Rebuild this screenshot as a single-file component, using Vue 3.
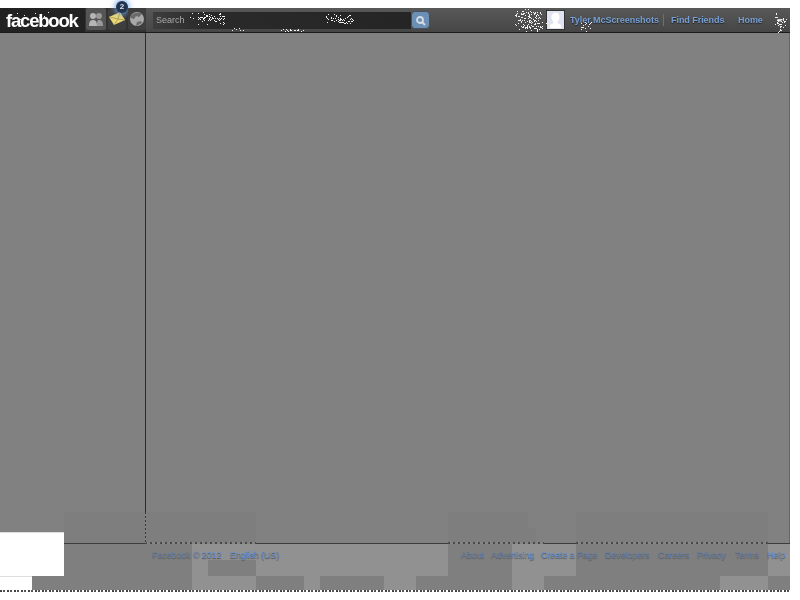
<script setup>
const footerLeft = [{ t: 'Facebook © 2012', w: 69 }, { t: 'English (US)', w: 48 }]
const footerRight = [
  { t: 'About', w: 23 }, { t: 'Advertising', w: 43 }, { t: 'Create a Page', w: 57 },
  { t: 'Developers', w: 46 }, { t: 'Careers', w: 32 }, { t: 'Privacy', w: 31 },
  { t: 'Terms', w: 25 }, { t: 'Help', w: 17 }
]
const box = (x, y, x2, y2) => ({ left: x + 'px', top: y + 'px', width: x2 - x + 'px', height: y2 - y + 'px' })
const upper = [[64, 512, 256, 543], [448, 512, 528, 543], [528, 528, 536, 543], [576, 512, 768, 543]].map(p => box(...p))
const lower = [
  [64, 544, 192, 576], [208, 560, 256, 576],
  [32, 576, 192, 592], [256, 576, 304, 592], [320, 576, 384, 592], [416, 576, 512, 592], [544, 576, 720, 592], [768, 576, 790, 592],
  [448, 544, 512, 576], [576, 544, 768, 576]
].map(p => box(...p))
const whites = [[0, 532, 64, 576], [0, 576, 32, 592]].map(p => box(...p))
const dashes = [[145, 542, 256, 544], [448, 542, 544, 544], [576, 542, 768, 544]].map(p => box(...p))

let seed = 7
const rnd = () => (seed = (seed * 16807) % 2147483647) / 2147483647
const cluster = (cx, cy, rx, ry, n) => Array.from({ length: n }, () => ({
  x: Math.round(cx + (rnd() + rnd() - 1) * rx),
  y: Math.round(cy + (rnd() + rnd() - 1) * ry)
})).filter(s => s.y >= 9 && s.y <= 32)
const specks = [
  ...cluster(208, 18, 20, 6, 70), ...cluster(340, 19, 16, 6, 60), ...cluster(530, 20, 18, 12, 150),
  ...cluster(290, 30, 20, 2, 18), ...cluster(232, 30, 14, 2, 8), ...cluster(780, 22, 8, 10, 40),
  ...cluster(40, 15, 30, 4, 10), ...cluster(586, 26, 8, 5, 18)
]
</script>

<template>
  <div class="page">
    <header class="bar">
      <div class="brand">facebook</div>
      <div class="jewels">
        <span class="jewel">
          <svg width="16" height="18" viewBox="0 0 16 18"><circle cx="5" cy="6" r="3" fill="#b5b5b5"/><path d="M1 16c0-4 1-6 4-6s4 2 4 6z" fill="#b5b5b5"/><circle cx="11" cy="6" r="3" fill="#999"/><path d="M9 16c0-4 0-6 2-6 3 0 4 2 4 6z" fill="#999"/></svg>
        </span>
        <span class="jewel plain">
          <svg width="18" height="16" viewBox="0 0 18 16"><path d="M1 6 12 1l5 8-11 5z" fill="#e8d678"/><path d="M1 6l9 2 2-7M6 14l4-6 7 1" fill="none" stroke="#a8964a" stroke-width=".8"/></svg>
          <i class="badge">2</i>
        </span>
        <span class="jewel plain">
          <svg width="18" height="16" viewBox="0 0 18 16"><circle cx="9" cy="8" r="7" fill="#a8a8a8"/><path d="M3 5c3-4 8-4 11-2l-3 3-3-1-2 3-3-1zM8 15l1-4 4-1 1 2z" fill="#6a6a6a"/></svg>
        </span>
      </div>
      <div class="search">
        <div class="field"><span>Search</span></div>
        <button class="go" aria-label="Search">
          <svg width="11" height="11" viewBox="0 0 11 11"><circle cx="5" cy="5" r="3" fill="none" stroke="#d5dde6" stroke-width="1.8"/><path d="M7.500 7.500 10 10" stroke="#d5dde6" stroke-width="1.800"/></svg>
        </button>
      </div>
      <nav class="nav">
        <span class="avatar">
          <svg width="17" height="17" viewBox="0 0 17 17"><rect width="17" height="17" fill="#dfe4f0"/><path d="M8.500 1.500c2.800 0 4 2.200 4 4.500s-1 4-2 4.800V12l3.500 2v3H3v-3l3.500-2v-1.200c-1-.8-2-2.500-2-4.800s1.200-4.500 4-4.500z" fill="#fff"/></svg>
        </span>
        <a class="name">Tyler McScreenshots</a>
        <i class="sep"></i>
        <a class="friends">Find Friends</a>
        <a class="home">Home</a>
        <i class="caret"></i>
      </nav>
    </header>

    <main class="main">
      <aside class="side"></aside>
      <section class="content"></section>
    </main>

    <footer class="foot">
      <div class="foot-left"><a v-for="l in footerLeft" :key="l.t" :style="{ width: l.w + 'px' }">{{ l.t }}</a></div>
      <div class="foot-right"><a v-for="l in footerRight" :key="l.t" :style="{ width: l.w + 'px' }">{{ l.t }}</a></div>
    </footer>

    <div v-for="(s, i) in upper" :key="'u' + i" class="patch-up" :style="s"></div>
    <div v-for="(s, i) in lower" :key="'p' + i" class="patch" :style="s"></div>
    <div v-for="(s, i) in whites" :key="'w' + i" class="white" :style="s"></div>
    <div v-for="(s, i) in dashes" :key="'d' + i" class="dash" :style="s"></div>
    <div class="dotline"></div>
    <div class="bottom-dots"></div>
    <svg class="noise" width="790" height="40" viewBox="0 0 790 40">
      <rect v-for="(s, i) in specks" :key="i" :x="s.x" :y="s.y" width="1" height="1" fill="#f2f2f2" />
    </svg>
  </div>
</template>

<style>
html, body { background: #fff; }
</style>

<style scoped>
.page {
  position: relative;
  width: 790px;
  height: 592px;
  padding-top: 8px;
  box-sizing: border-box;
  display: flex;
  flex-direction: column;
  overflow: hidden;
  font-family: "Liberation Sans", Arial, sans-serif;
}
.bar {
  height: 25px;
  flex: none;
  display: flex;
  align-items: center;
  box-sizing: border-box;
  background: linear-gradient(#585858, #464646);
  border-bottom: 1px solid #1c1c1c;
  position: relative;
}
.brand {
  width: 85px;
  height: 24px;
  flex: none;
  box-sizing: border-box;
  padding-left: 6px;
  background: #222;
  color: #fff;
  font-size: 18.500px;
  line-height: 26px;
  font-weight: 700;
  letter-spacing: -1.200px;
  filter: blur(.3px);
}
.jewels { display: flex; gap: 1px; height: 24px; width: 61px; flex: none; background: #333; }
.jewel {
  position: relative;
  width: 20px;
  height: 22px;
  margin-left: 1px;
  border-radius: 2px;
  display: flex;
  align-items: center;
  justify-content: center;
  background: #555;
  filter: blur(.3px);
}
.jewel.plain { background: #3e3e3e; width: 18px; }
.badge {
  position: absolute;
  left: 8px;
  top: -7px;
  width: 12px;
  height: 12px;
  border-radius: 50%;
  background: #24344e;
  box-shadow: 0 0 5px 2px rgba(110, 165, 235, .7);
  color: #cfe0f5;
  font: 700 8px/12px "Liberation Sans", Arial, sans-serif;
  text-align: center;
}
.search { display: flex; align-items: center; margin-left: 7px; width: 278px; flex: none; }
.field {
  width: 258px;
  height: 17px;
  background: linear-gradient(90deg, #3d3d3d, #2a2a2a 20%, #252525);
  box-sizing: border-box;
  padding-left: 3px;
  font-size: 9px;
  line-height: 16px;
  color: #a8a8a8;
  filter: blur(.3px);
}
.go {
  width: 19px;
  height: 18px;
  padding: 0;
  border: 1px solid #46505e;
  border-radius: 4px;
  background: #6c8fb5;
  display: flex;
  align-items: center;
  justify-content: center;
  filter: blur(.3px);
}
.nav { margin-left: 115px; display: flex; align-items: center; height: 24px; }
.avatar { width: 19px; height: 20px; display: flex; border: 1px solid #333; box-sizing: border-box; overflow: hidden; background: #dfe4f0; }
.avatar svg { flex: none; }
.nav a {
  font-size: 9px;
  font-weight: 700;
  color: #769fd4;
  text-shadow: 0 1px 1px #222;
  white-space: nowrap;
  letter-spacing: -.05px;
  filter: blur(.3px);
}
.name { margin-left: 5px; width: 87px; letter-spacing: -.15px; }
.sep { width: 1px; height: 12px; background: #5b7290; margin-left: 6px; }
.friends { margin-left: 7px; width: 55px; }
.home { margin-left: 12px; width: 26px; }
.caret {
  margin-left: 13px;
  width: 0;
  height: 0;
  border: 3px solid transparent;
  border-top: 3px solid #ddd;
  margin-top: 3px;
}
.main { flex: 1; display: flex; min-height: 0; background: #818181; border-bottom: 1px solid #3c3c3c; }
.side { width: 145px; flex: none; border-right: 1px solid #2c2c2c; }
.content { flex: 1; border-right: 1px solid #666; }
.foot {
  height: 48px;
  flex: none;
  background: #919191;
  display: flex;
  box-sizing: border-box;
  padding: 4px 0 0 152px;
  font-size: 9px;
  line-height: 14px;
  color: #6591d2;
  text-shadow: 0 1px 1px #4a4a4a;
}
.foot-left { display: flex; gap: 9px; width: 309px; }
.foot-right { display: flex; gap: 7px; }
.foot a { white-space: nowrap; letter-spacing: -.12px; filter: blur(.3px); }
.patch { position: absolute; background: rgba(100, 100, 100, .4); }
.patch-up { position: absolute; background: #7e7e7e; }
.white { position: absolute; background: #fff; border-top: 1px solid #ddd; box-sizing: border-box; }
.dash {
  position: absolute;
  background: repeating-linear-gradient(90deg, #4a4a4a 0 2px, #858585 2px 5px);
}
.dotline {
  position: absolute;
  left: 145px;
  top: 512px;
  width: 1px;
  height: 31px;
  background: repeating-linear-gradient(#3a3a3a 0 2px, #858585 2px 4px);
}
.bottom-dots {
  position: absolute;
  left: 0;
  right: 0;
  bottom: 0;
  height: 2px;
  background: repeating-linear-gradient(90deg, #444 0 2px, #fff 2px 3px, #555 3px 5px, #fff 5px 7px);
}
.noise { position: absolute; left: 0; top: 0; pointer-events: none; }
</style>
